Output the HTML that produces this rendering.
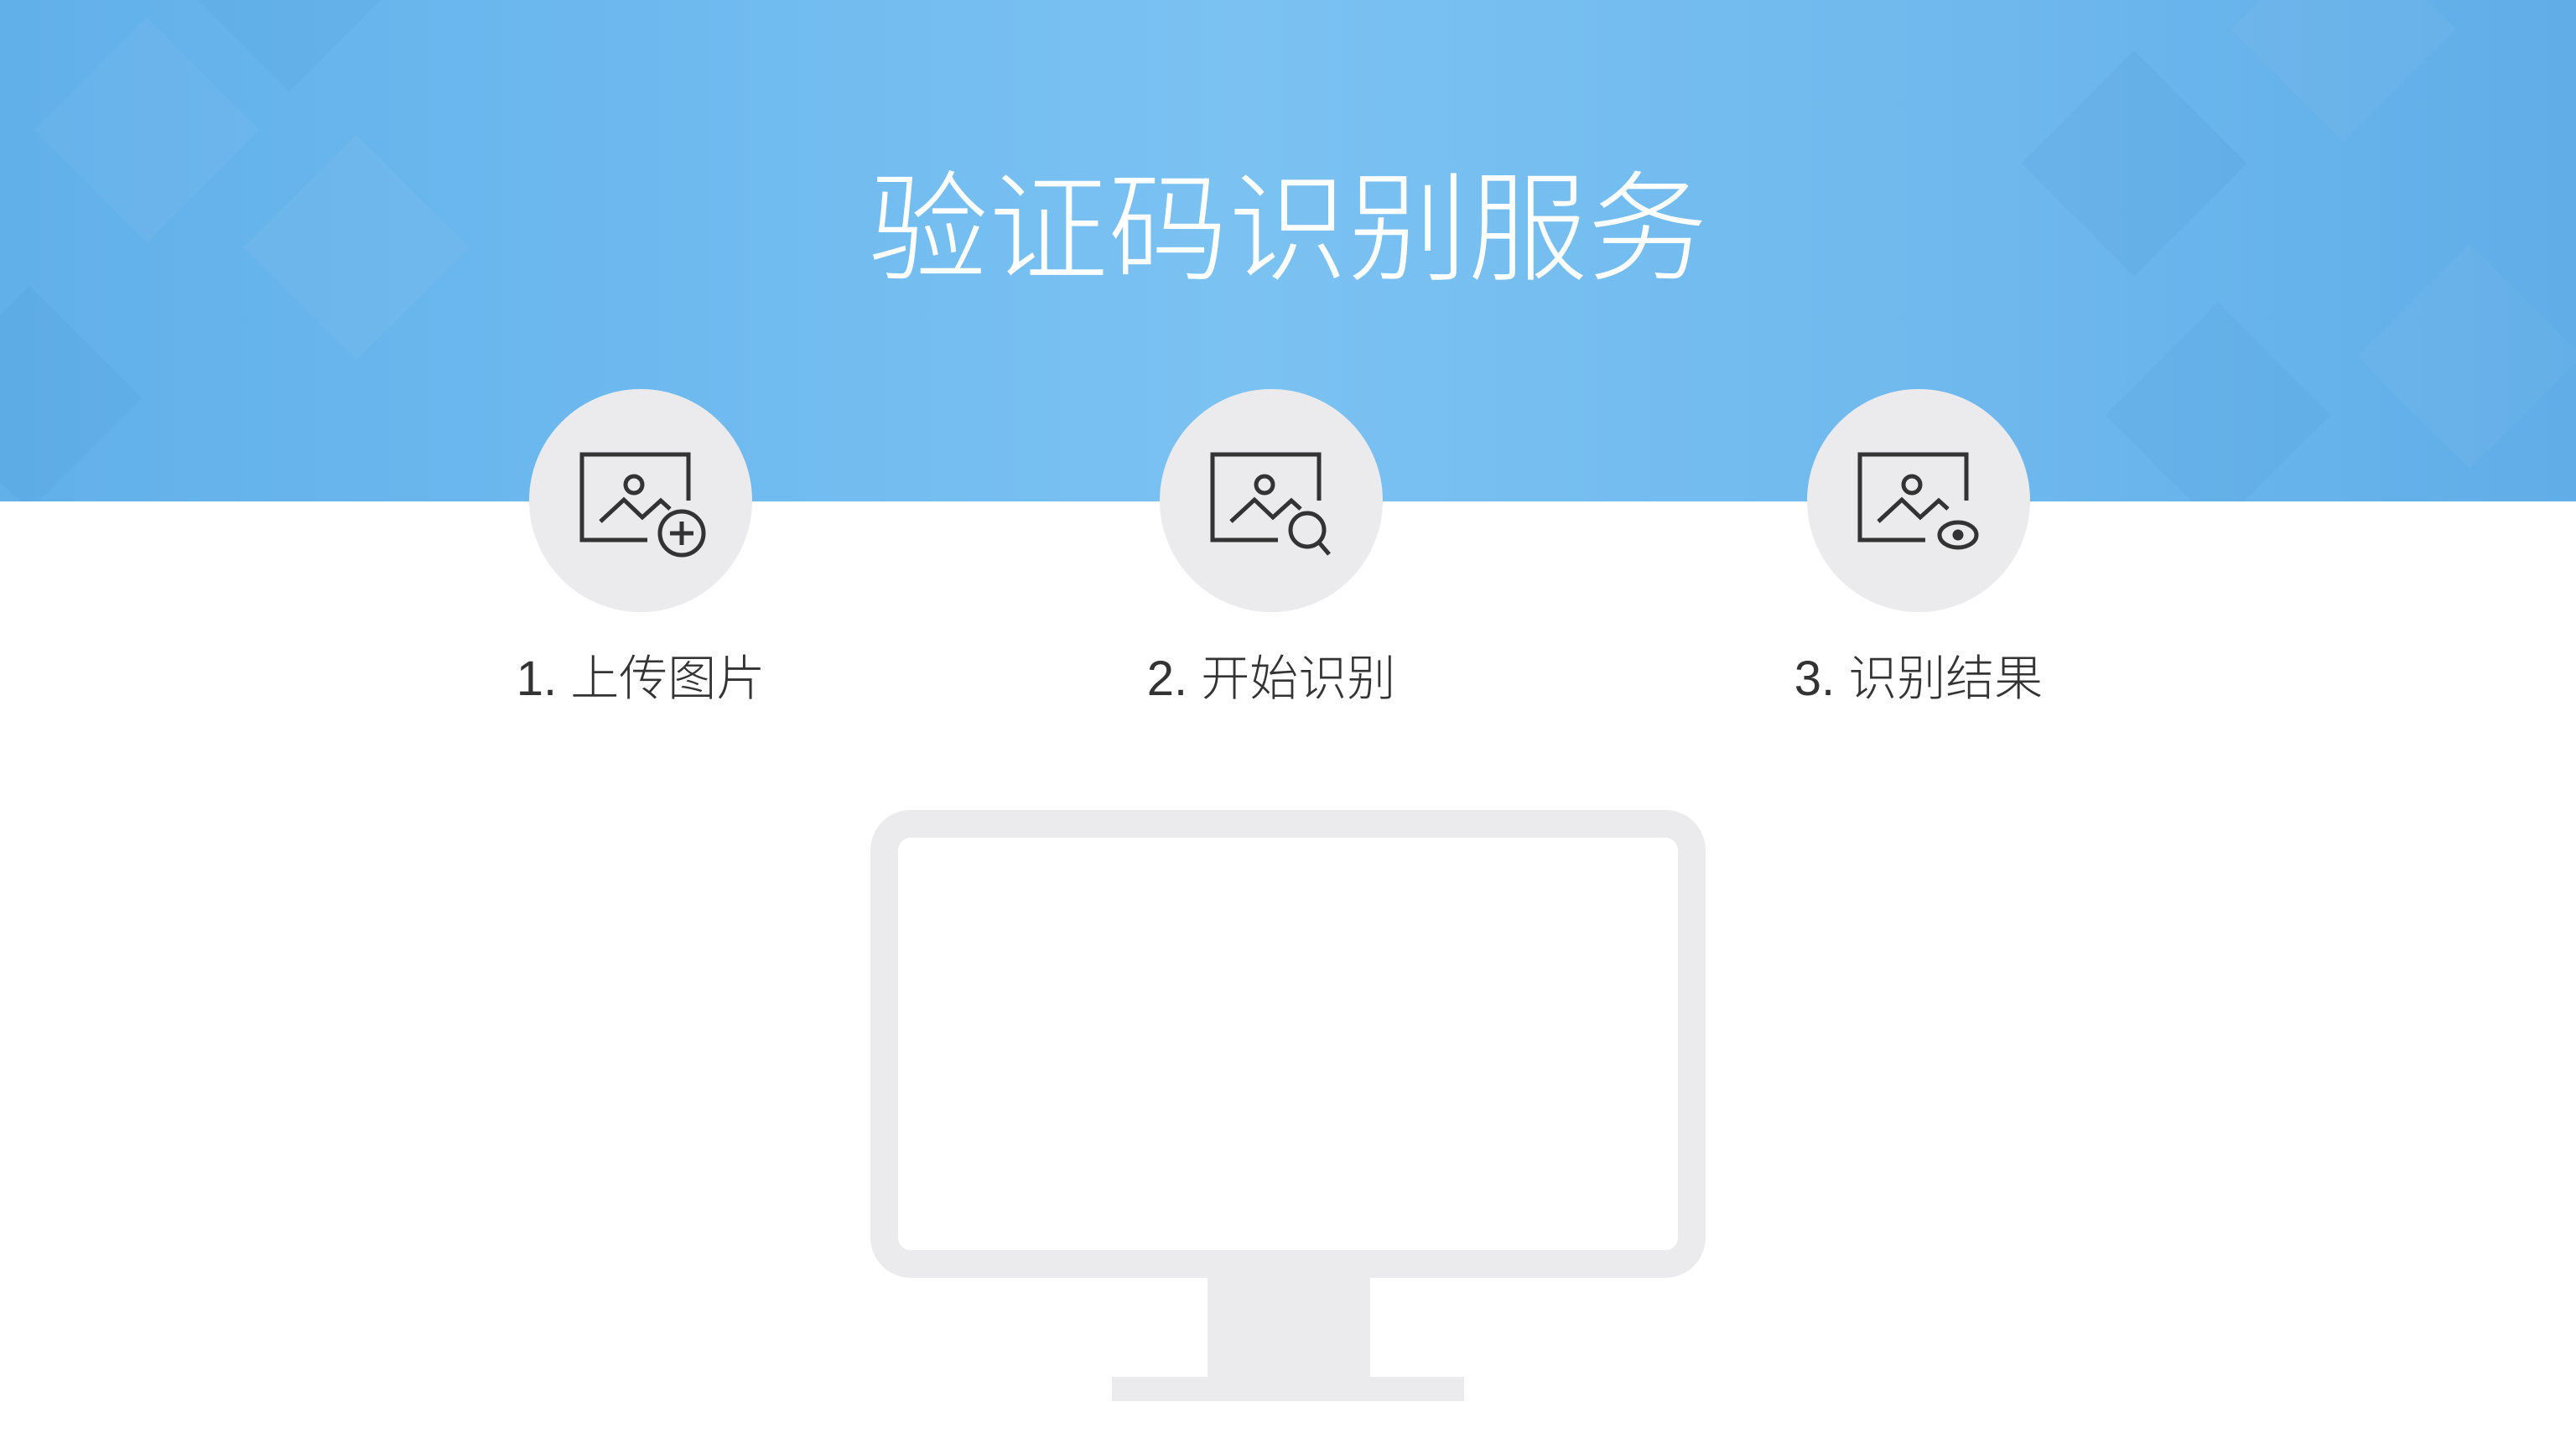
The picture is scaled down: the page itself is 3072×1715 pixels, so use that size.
<!DOCTYPE html>
<html><head><meta charset="utf-8"><style>
html,body{margin:0;padding:0;}
body{width:3072px;height:1715px;position:relative;overflow:hidden;background:#fff;font-family:"Liberation Sans","Noto Sans CJK SC",sans-serif;}
#hdr{position:absolute;left:0;top:0;width:3072px;height:598px;overflow:hidden;
background:linear-gradient(90deg,#62b0ea 0%,#6db9ef 25%,#7bc2f2 48%,#6fb9ee 75%,#60ade8 100%);}
.d{position:absolute;width:190px;height:190px;transform:rotate(45deg);}
h1{position:absolute;left:0;top:162px;width:3072px;margin:0;text-align:center;color:#fff;font-weight:300;font-size:143px;line-height:200px;font-family:"Noto Sans CJK SC",sans-serif;letter-spacing:0px;}
.c{position:absolute;top:464px;width:266px;height:266px;border-radius:50%;background:#ebebed;}
.c svg{position:absolute;left:0;top:0;}
.l{position:absolute;top:770px;width:500px;text-align:center;font-size:58px;line-height:80px;color:#333;font-weight:300;font-family:"Liberation Sans","Noto Sans CJK SC",sans-serif;}
</style></head><body>
<div id="hdr">
<div class="d" style="left:80px;top:60px;background:rgba(255,255,255,.035)"></div>
<div class="d" style="left:330px;top:200px;background:rgba(255,255,255,.04)"></div>
<div class="d" style="left:-60px;top:380px;background:rgba(0,60,140,.03)"></div>
<div class="d" style="left:250px;top:-120px;background:rgba(0,60,140,.03)"></div>
<div class="d" style="left:2450px;top:100px;background:rgba(0,60,140,.035)"></div>
<div class="d" style="left:2700px;top:-60px;background:rgba(255,255,255,.035)"></div>
<div class="d" style="left:2850px;top:330px;background:rgba(255,255,255,.035)"></div>
<div class="d" style="left:2550px;top:400px;background:rgba(0,60,140,.03)"></div>
<h1>验证码识别服务</h1>
</div>

<div class="c" style="left:631px">
<svg width="266" height="266" viewBox="0 0 266 266" fill="none" stroke="#333" stroke-width="5">
<path d="M141 180 H63 V78 H190 V133"/>
<circle cx="125" cy="114" r="10"/>
<path d="M85 158 L113 132 L135 153 L157 133 L168 143"/>
<circle cx="182" cy="172" r="26"/>
<path d="M182 158 V186 M168 172 H196"/>
</svg></div>
<div class="l" style="left:514px">1. 上传图片</div>

<div class="c" style="left:1383px">
<svg width="266" height="266" viewBox="0 0 266 266" fill="none" stroke="#333" stroke-width="5">
<path d="M141 180 H63 V78 H190 V133"/>
<circle cx="125" cy="114" r="10"/>
<path d="M85 158 L113 132 L135 153 L157 133 L168 143"/>
<circle cx="176" cy="168" r="20"/>
<path d="M190 183 L202 197"/>
</svg></div>
<div class="l" style="left:1266px">2. 开始识别</div>

<div class="c" style="left:2155px">
<svg width="266" height="266" viewBox="0 0 266 266" fill="none" stroke="#333" stroke-width="5">
<path d="M141 180 H63 V78 H190 V133"/>
<circle cx="125" cy="114" r="10"/>
<path d="M85 158 L113 132 L135 153 L157 133 L168 143"/>
<ellipse cx="180" cy="174" rx="22" ry="15"/>
<circle cx="180" cy="174" r="4" fill="#333"/>
</svg></div>
<div class="l" style="left:2038px">3. 识别结果</div>

<div style="position:absolute;left:1038px;top:966px;width:930px;height:492px;border:33px solid #ebebed;border-radius:48px;"></div>
<div style="position:absolute;left:1440px;top:1524px;width:194px;height:118px;background:#ebebed;"></div>
<div style="position:absolute;left:1326px;top:1642px;width:420px;height:29px;background:#ebebed;"></div>
</body></html>
